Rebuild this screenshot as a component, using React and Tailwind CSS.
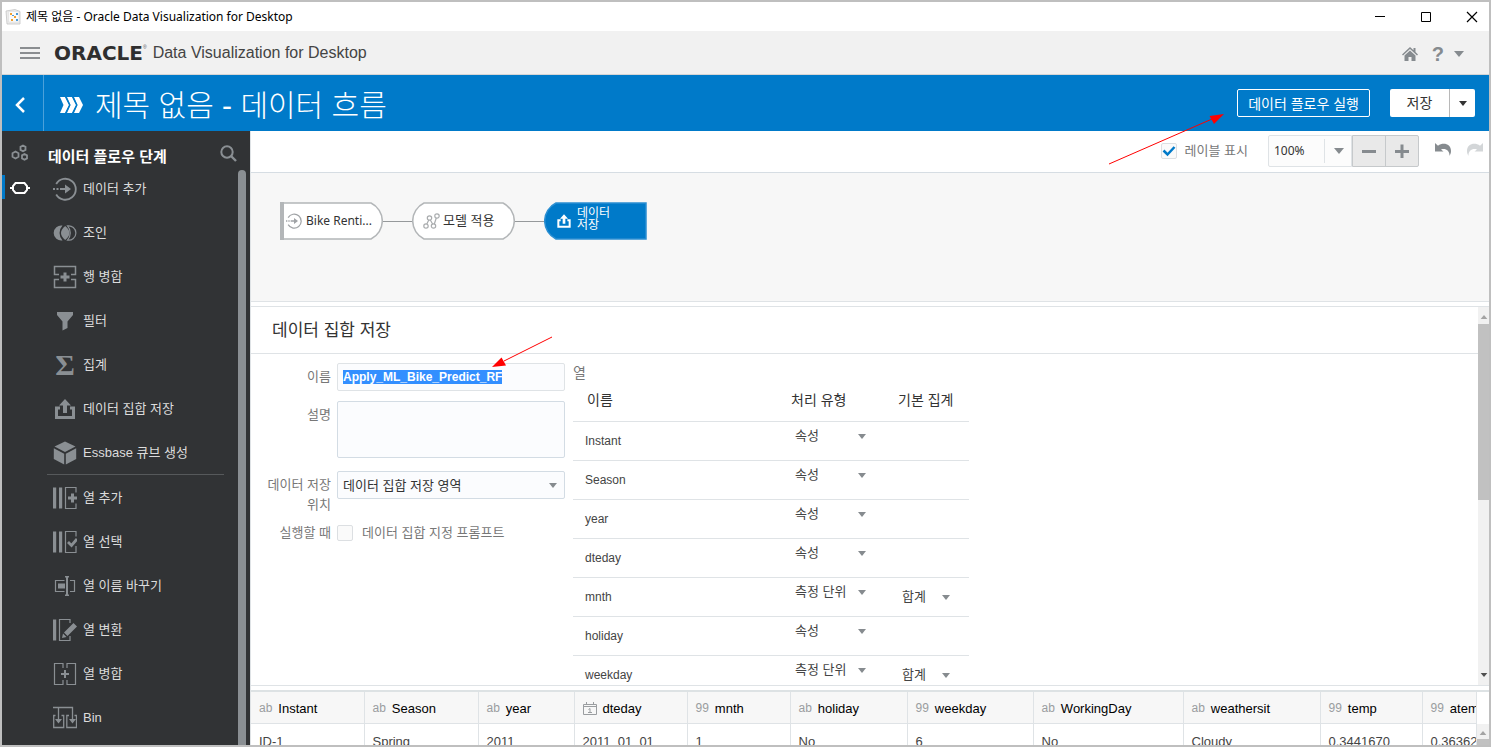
import { useEffect, useRef, useState } from "react";

const ICONS = {
  add: (
    <>
      <path d="M3.2 7A10.5 10.5 0 1 1 3.2 17.5" fill="none" stroke="currentColor" strokeWidth="1.8" />
      <path d="M0 11h2v2H0zM3.5 11h2v2h-2zM7 11h5V7.5l6 4.5-6 4.5V13H7z" />
    </>
  ),
  join: (
    <>
      <path d="M9.5 4.5A7.6 7.6 0 1 0 9.5 19.5A11 11 0 0 1 9.500 4.500z" />
      <path d="M12.200 5C15 7.500 16.500 9.500 16.500 12S15 16.500 12.200 19C9.400 16.500 8 14.500 8 12S9.400 7.500 12.200 5z" />
      <path d="M14.500 4.900A7.200 7.200 0 1 1 14.500 19.100A10.500 10.500 0 0 0 14.500 4.900z" fill="none" stroke="currentColor" strokeWidth="1.200" />
    </>
  ),
  rowMerge: (
    <>
      <path d="M6 9.5H1.5v-8h21v8H18M6 14.5H1.5v8h21v-8H18" fill="none" stroke="currentColor" strokeWidth="1.5" />
      <path d="M10.5 7.5h3v3h3v3h-3v3h-3v-3h-3v-3h3z" />
    </>
  ),
  filter: <path d="M4 3h16v3l-5.5 6.5V19L9.5 21.5v-9L4 6z" />,
  save: (
    <>
      <path d="M7 11H3.5v9.5h17V11H17" fill="none" stroke="currentColor" strokeWidth="3" />
      <path d="M12 2l6 6.5h-4V16h-4V8.500H6z" />
    </>
  ),
  cube: (
    <>
      <path d="M12 0.500L22.500 5.500 12 11 1.500 5.500z" />
      <path d="M0.800 7.300L11.200 12.700V23.600L0.800 18z" />
      <path d="M23.200 7.300L12.800 12.700V23.600L23.200 18z" />
    </>
  ),
  addCol: (
    <>
      <path d="M0 1.500h3.200v21H0zM6 1.500h3.200v21H6z" />
      <path d="M23 6.500V1.500H12.500v21H23V17.500" fill="none" stroke="currentColor" strokeWidth="1.200" />
      <path d="M18 7.500h3v3h3v3h-3v3h-3v-3h-3v-3h3z" />
    </>
  ),
  selectCol: (
    <>
      <path d="M0 1.500h3.200v21H0zM6 1.500h3.200v21H6z" />
      <path d="M23 6.500V1.500H12.500v21H23V16" fill="none" stroke="currentColor" strokeWidth="1.200" />
      <path d="M15 12l3.500 3.500L24 9" fill="none" stroke="currentColor" strokeWidth="2.800" />
    </>
  ),
  rename: (
    <>
      <path d="M11.500 6.500h-9v11h9M17 6.500h4.500v11H17" fill="none" stroke="currentColor" strokeWidth="1.200" />
      <path d="M5 9.500h7v5H5zM12 2h4v1.500h-1v17h1V22h-4v-1.500h1v-17h-1z" />
    </>
  ),
  transform: (
    <>
      <path d="M0 1.500h3.200v21H0z" />
      <path d="M17 5V1.500H6.500v21H17V18" fill="none" stroke="currentColor" strokeWidth="1.200" />
      <path d="M20.500 5L24 8.500 14.500 18 11 14.500zM10 15.500l3.500 3.500L9 20z" />
    </>
  ),
  colMerge: (
    <>
      <path d="M10 6V1.500H1.500v21H10V18M14 6V1.500h8.500v21H14V18" fill="none" stroke="currentColor" strokeWidth="1.200" />
      <path d="M11 8h2v3h3v2h-3v3h-2v-3H8v-2h3z" />
    </>
  ),
  bin: (
    <>
      <path d="M0 1.500h19.500V14M5.500 1.500V14M2.500 9.500H.700v12h10v-12H8.500M16 9.500h-2.200v12h9.700v-12h-2" fill="none" stroke="currentColor" strokeWidth="1.300" />
      <path d="M2 13h7l-3.500 4.500zM16 13h7l-3.500 4.500z" />
    </>
  ),
};

const STEPS = [
  ["add", "데이터 추가"],
  ["join", "조인"],
  ["rowMerge", "행 병합"],
  ["filter", "필터"],
  ["sigma", "집계"],
  ["save", "데이터 집합 저장"],
  ["cube", "Essbase 큐브 생성"],
];

const COLUMN_STEPS = [
  ["addCol", "열 추가"],
  ["selectCol", "열 선택"],
  ["rename", "열 이름 바꾸기"],
  ["transform", "열 변환"],
  ["colMerge", "열 병합"],
  ["bin", "Bin"],
];

const COLUMNS = [
  { name: "Instant", type: "속성" },
  { name: "Season", type: "속성" },
  { name: "year", type: "속성" },
  { name: "dteday", type: "속성" },
  { name: "mnth", type: "측정 단위", agg: "합계" },
  { name: "holiday", type: "속성" },
  { name: "weekday", type: "측정 단위", agg: "합계" },
];

const PREVIEW = [
  { kind: "ab", name: "Instant", value: "ID-1", width: "w-[113px]" },
  { kind: "ab", name: "Season", value: "Spring", width: "w-[114px]" },
  { kind: "ab", name: "year", value: "2011", width: "w-[96px]" },
  { kind: "date", name: "dteday", value: "2011_01_01", width: "w-[113px]" },
  { kind: "99", name: "mnth", value: "1", width: "w-[103px]" },
  { kind: "ab", name: "holiday", value: "No", width: "w-[117px]" },
  { kind: "99", name: "weekday", value: "6", width: "w-[126px]" },
  { kind: "ab", name: "WorkingDay", value: "No", width: "w-[150px]" },
  { kind: "ab", name: "weathersit", value: "Cloudy", width: "w-[137px]" },
  { kind: "99", name: "temp", value: "0.3441670", width: "w-[102px]" },
  { kind: "99", name: "atemp", value: "0.3636250", width: "w-[102px]" },
];

function Icon({ name, className = "size-6" }) {
  if (name === "sigma") {
    return (
      <span aria-hidden="true" className="w-6 text-center font-['Liberation_Serif',serif] text-[30px] leading-6 font-bold">
        Σ
      </span>
    );
  }
  return (
    <svg viewBox="0 0 24 24" fill="currentColor" aria-hidden="true" className={`shrink-0 ${className}`}>
      {ICONS[name]}
    </svg>
  );
}

function Caret({ className = "" }) {
  return (
    <svg viewBox="0 0 10 6" fill="currentColor" aria-hidden="true" className={className}>
      <path d="M0 0h10L5 6z" />
    </svg>
  );
}

function Arrow({ className, d, head }) {
  return (
    <svg viewBox="0 0 120 54" aria-hidden="true" className={`pointer-events-none absolute z-10 h-[54px] w-[120px] ${className}`}>
      <path d={d} stroke="#f00" strokeWidth="1" />
      <path d={head} fill="#f00" />
    </svg>
  );
}

function TitleBar() {
  return (
    <div className="flex h-[29px] shrink-0 items-center bg-white pl-[3px] text-black">
      <svg viewBox="0 0 16 16" aria-hidden="true" className="size-4">
        <path d="M1 2l9-1.500 5 2V15H2z" fill="#ececec" stroke="#c4c4c4" strokeWidth=".8" />
        <path d="M3.500 2.500H14V13H3.500z" fill="#fafafa" stroke="#d8d8d8" strokeWidth=".5" />
        <path d="M5 4h2v2H5zM9 7h2v2H9zM6 10h2v2H6z" fill="#f0a030" />
        <path d="M11 4h2v2h-2zM7 6h2v1H7zM11 10h2v2h-2z" fill="#4a9ad8" />
      </svg>
      <span className="ml-[5px] font-['Noto_Sans','Noto_Sans_CJK_KR',sans-serif] text-xs">
        제목 없음 - Oracle Data Visualization for Desktop
      </span>
      <div className="ml-auto flex">
        <button aria-label="최소화" className="flex h-7 w-[46px] items-center justify-center">
          <svg viewBox="0 0 12 12" className="size-3"><path d="M1 5.500h10" stroke="#000" /></svg>
        </button>
        <button aria-label="최대화" className="flex h-7 w-[46px] items-center justify-center">
          <svg viewBox="0 0 12 12" className="size-3"><path d="M1.500 1.500h9v9h-9z" fill="none" stroke="#000" /></svg>
        </button>
        <button aria-label="닫기" className="flex h-7 w-[40px] items-center justify-center pl-1.5">
          <svg viewBox="0 0 12 12" className="size-3"><path d="M1 1l10 10M11 1L1 11" stroke="#000" strokeWidth="1.200" /></svg>
        </button>
      </div>
    </div>
  );
}

function AppHeader() {
  return (
    <header className="flex h-11 shrink-0 items-center border-b border-[#d5d5d5] bg-[#f1f1f1] pr-[25px] pl-[18px]">
      <button aria-label="메뉴" className="text-[#8a8d90]">
        <svg viewBox="0 0 20 12" className="h-3 w-5">
          <path d="M0 1h20M0 6h20M0 11h20" stroke="currentColor" strokeWidth="2" />
        </svg>
      </button>
      <span className="ml-3.5 font-['DejaVu_Sans',sans-serif] text-xl leading-6 font-bold text-[#2f2f2f]">ORACLE</span>
      <span className="mb-3 text-[5px] leading-3 text-[#555]">®</span>
      <span className="ml-1.5 text-base text-[#444]">Data Visualization for Desktop</span>
      <div className="ml-auto flex items-center pt-0.5 text-[#868b8f]">
        <button aria-label="홈">
          <svg viewBox="0 0 16 14" fill="currentColor" className="h-3.5 w-4">
            <path d="M8 0l3.500 3.200V1H13.500v4L16 7.500l-1 1L8 2 1 8.500l-1-1z" />
            <path d="M8 3.500l5.500 5V14h-4v-4h-3v4h-4V8.500z" />
          </svg>
        </button>
        <button className="ml-3.5 flex items-center" aria-label="도움말">
          <span className="text-xl leading-5 font-bold">?</span>
          <Caret className="ml-2.5 h-1.5 w-2.5" />
        </button>
      </div>
    </header>
  );
}

function FlowHeader() {
  return (
    <div className="flex h-14 shrink-0 items-center bg-[#007ac9] pr-3.5 text-white">
      <button aria-label="뒤로" className="flex h-14 w-[42px] items-center border-r border-[#4ba1da] pt-1 pl-3">
        <svg viewBox="0 0 12 16" className="h-4 w-3">
          <path d="M10 1L3 8l7 7" fill="none" stroke="currentColor" strokeWidth="2.500" />
        </svg>
      </button>
      <div className="ml-4 flex items-center pt-1">
        <svg viewBox="0 0 23 16" fill="currentColor" aria-hidden="true" className="h-4 w-[23px]">
          <path d="M0 0h5l4 8-4 8H0l3.500-8zM7 0h5l4 8-4 8H7l3.500-8zM14 0h5l4 8-4 8h-5l3.500-8z" />
          <path d="M5.800 0l4 8-4 8M12.800 0l4 8-4 8" fill="none" stroke="#007ac9" strokeWidth="1.200" />
        </svg>
        <h1 className="ml-3 pt-0.5 text-[30px] leading-9 font-light">제목 없음 - 데이터 흐름</h1>
      </div>
      <button className="ml-auto h-7 rounded-xs border border-white px-2.5 pt-px text-sm">데이터 플로우 실행</button>
      <div className="ml-5 flex h-7 rounded-xs bg-white text-[#333]">
        <button className="w-[60px] border-r border-[#b8b8b8] text-sm">저장</button>
        <button aria-label="저장 옵션" className="flex w-[25px] items-center justify-center">
          <Caret className="h-[5px] w-2" />
        </button>
      </div>
    </div>
  );
}

function StepList({ steps }) {
  return (
    <ul>
      {steps.map(([icon, label]) => (
        <li key={label}>
          <button className="flex h-11 w-full items-center gap-1.5 pt-0.5 pl-[11px] text-left text-[13px] text-[#dcdcdc]">
            <span className="flex text-[#8a8f93]">
              <Icon name={icon} />
            </span>
            {label}
          </button>
        </li>
      ))}
    </ul>
  );
}

function Sidebar() {
  return (
    <aside className="flex w-[248px] shrink-0 bg-[#313335]">
      <nav className="flex w-10 flex-col">
        <button aria-label="데이터" className="flex h-11 items-center pl-[9px] text-[#8a8f93]">
          <svg viewBox="0 0 18 18" fill="none" stroke="currentColor" strokeWidth="1.800" className="size-[18px]">
            <path d="M4.500 7.500l3 1.700v3.600l-3 1.700-3-1.700V9.200zM12 1.500l2.500 1.400v3L12 7.300 9.500 5.900v-3zM13.500 10l2.500 1.400v3l-2.500 1.400-2.500-1.400v-3z" />
          </svg>
        </button>
        <button aria-label="데이터 플로우 단계" className="flex h-6 items-center border-l-3 border-[#007ac9] pt-px pl-[5px] text-white">
          <svg viewBox="0 0 20 12" fill="none" stroke="currentColor" strokeWidth="2" className="h-3 w-5">
            <path d="M5.500 1h9l2.500 3v4l-2.500 3h-9L3 8V4zM0 6h3M17 6h3" />
          </svg>
        </button>
      </nav>
      <div className="flex min-w-0 flex-1 flex-col">
        <div className="flex h-[35px] shrink-0 items-start justify-between pr-[13px] pl-1.5">
          <h2 className="pt-[17px] text-[15px] leading-[18px] font-bold text-white">데이터 플로우 단계</h2>
          <button aria-label="검색" className="pt-3.5 text-[#8a8f93]">
            <svg viewBox="0 0 17 17" fill="none" stroke="currentColor" strokeWidth="2" className="size-[17px]">
              <circle cx="7" cy="7" r="5.700" />
              <path d="M11 11l5 5" strokeWidth="2.400" />
            </svg>
          </button>
        </div>
        <div className="flex min-h-0 flex-1">
          <div className="flex-1 overflow-hidden">
            <StepList steps={STEPS} />
            <hr className="mr-3.5 ml-[5px] border-[#56595b]" />
            <StepList steps={COLUMN_STEPS} />
          </div>
          <div className="mt-1 mr-1 w-2 rounded-t-full bg-[#8a8f93]" />
        </div>
      </div>
    </aside>
  );
}

function Checkbox({ label, checked, onChange, className }) {
  return (
    <label className={`flex items-center text-[13px] text-[#777] ${className}`}>
      <span className="relative flex">
        <input
          type="checkbox"
          checked={checked}
          onChange={(e) => onChange(e.target.checked)}
          className="peer size-4 appearance-none rounded-xs border border-[#dcdfe2] bg-[#fafafa]"
        />
        <svg viewBox="0 0 16 16" className="pointer-events-none absolute inset-0 hidden size-4 peer-checked:block">
          <path d="M2.500 7.500l4 4 7-7.500" fill="none" stroke="#007ac9" strokeWidth="2.500" />
        </svg>
      </span>
      <span>{label}</span>
    </label>
  );
}

function Toolbar() {
  const [showLabels, setShowLabels] = useState(true);

  return (
    <div className="flex h-[42px] shrink-0 items-center border-b border-[#d6dde3] bg-white pr-1.5 pb-px">
      <Checkbox label="레이블 표시" checked={showLabels} onChange={setShowLabels} className="ml-auto gap-2" />
      <div className="relative ml-5 flex">
        <select
          aria-label="확대/축소"
          className="h-8 w-[84px] appearance-none rounded-l-xs border border-[#dfe3e6] bg-[#fcfcfc] pl-[5px] font-['Noto_Sans',sans-serif] text-xs text-[#333]"
        >
          <option>100%</option>
        </select>
        <span className="pointer-events-none absolute inset-y-1 right-0 flex w-7 items-center justify-center border-l border-[#dfe3e6] text-[#868b8f]">
          <Caret className="h-1.5 w-2.5" />
        </span>
      </div>
      <div className="flex h-8 rounded-r-xs border border-[#c6c9cb] bg-[#e9e9e9] text-[#868b8f]">
        <button aria-label="축소" className="flex w-[33px] items-center justify-center border-r border-[#c6c9cb]">
          <svg viewBox="0 0 14 14" className="size-3.5"><path d="M0 7.500h14" stroke="currentColor" strokeWidth="3" /></svg>
        </button>
        <button aria-label="확대" className="flex w-8 items-center justify-center">
          <svg viewBox="0 0 14 14" className="size-3.5"><path d="M0 7.500h14M7 .5v14" stroke="currentColor" strokeWidth="3" /></svg>
        </button>
      </div>
      <button aria-label="실행 취소" className="ml-4 pb-1 text-[#868b8f]">
        <svg viewBox="0 0 17 13" fill="currentColor" className="h-[13px] w-[17px]">
          <path d="M0 0l3 2.700C8-.800 16 .500 16 8c0 2-.700 3.500-1.500 5 .3-5-3.500-8-8.500-6.500L8.500 8.500H0z" />
        </svg>
      </button>
      <button aria-label="다시 실행" className="ml-3.5 pb-1 text-[#d3d6d8]">
        <svg viewBox="0 0 17 13" fill="currentColor" className="h-[13px] w-[17px]">
          <path d="M17 0l-3 2.700C9-.800 1 .500 1 8c0 2 .700 3.500 1.500 5-.3-5 3.500-8 8.500-6.500L8.500 8.500H17z" />
        </svg>
      </button>
    </div>
  );
}

function FlowNode({ shape, selected, children }) {
  return (
    <button className={`relative flex h-[38px] w-[103px] items-center text-left ${selected ? "text-white" : "text-[#333]"}`}>
      <svg viewBox="0 0 103 38" aria-hidden="true" className="absolute inset-0 h-[38px] w-[103px]">
        <path d={shape} fill={selected ? "#007ac9" : "#fff"} stroke={selected ? "#2b8fd2" : "#b3b6b8"} strokeWidth="1.500" />
        {shape.startsWith("M2") && <path d="M2 0v38" stroke="#b3b6b8" strokeWidth="4" />}
      </svg>
      {children}
    </button>
  );
}

function FlowCanvas() {
  return (
    <section className="flex h-[129px] shrink-0 items-start border-b border-[#dfe3e6] bg-[#f7f7f7] pt-[29px] pl-[29px]">
      <FlowNode shape="M2 1H91A20 20 0 0 1 91 37H2z">
        <span className="relative flex items-center pl-1.5 text-[#a0a3a6]">
          <Icon name="add" className="size-4" />
          <span className="ml-1 font-['Noto_Sans',sans-serif] text-xs text-[#333]">Bike Renti...</span>
        </span>
      </FlowNode>
      <span className="mt-[19px] h-px w-[29px] bg-[#96999b]" />
      <FlowNode shape="M12 1H91A20 20 0 0 1 91 37H12A20 20 0 0 1 12 1z">
        <span className="relative flex items-center pl-[11px] text-[13px]">
          <svg viewBox="0 0 17 16" fill="none" stroke="#a9acae" strokeWidth="1.200" className="h-4 w-[17px]">
            <circle cx="3" cy="13" r="2.200" />
            <circle cx="6.500" cy="5" r="2.200" />
            <circle cx="10.500" cy="13" r="2.200" />
            <circle cx="14" cy="3" r="2.200" />
            <path d="M3.800 11l2-4M7.300 7l2.300 4M11.300 11l2-6" />
          </svg>
          <span className="ml-[3px]">모델 적용</span>
        </span>
      </FlowNode>
      <span className="mt-[19px] h-px w-[29px] bg-[#96999b]" />
      <FlowNode shape="M12 1H102V37H12A20 20 0 0 1 12 1z" selected>
        <span className="relative flex items-center pl-3">
          <Icon name="save" className="size-4" />
          <span className="ml-[5px] pb-1 text-xs leading-3">
            데이터
            <br />
            저장
          </span>
        </span>
      </FlowNode>
    </section>
  );
}

function SaveForm() {
  const nameRef = useRef(null);
  const [name, setName] = useState("Apply_ML_Bike_Predict_RF");
  const [prompt, setPrompt] = useState(false);

  useEffect(() => {
    nameRef.current.focus();
    nameRef.current.select();
  }, []);

  return (
    <form className="w-[314px] shrink-0 pt-[9px] text-[13px] leading-5 text-[#777]">
      <div className="flex gap-1.5">
        <label htmlFor="ds-name" className="w-20 pt-1 text-right">이름</label>
        <input
          id="ds-name"
          ref={nameRef}
          value={name}
          onChange={(e) => setName(e.target.value)}
          className="h-7 min-w-0 flex-1 rounded-xs border border-[#dfe3e6] bg-[#fbfcfe] px-[5px] text-xs leading-[14px] font-bold text-[#333] outline-none selection:bg-[#338fff] selection:text-white"
        />
      </div>
      <div className="mt-2.5 flex gap-1.5">
        <label htmlFor="ds-desc" className="w-20 pt-1 text-right">설명</label>
        <textarea id="ds-desc" className="h-[57px] min-w-0 flex-1 resize-none rounded-xs border border-[#d3dce4] bg-[#fbfcfe]" />
      </div>
      <div className="mt-[13px] flex h-11 items-start gap-1.5">
        <label htmlFor="ds-target" className="w-20 pt-1 pl-2.5 text-right">데이터 저장 위치</label>
        <div className="relative flex-1">
          <select
            id="ds-target"
            className="h-7 w-full appearance-none rounded-xs border border-[#d3dce4] bg-[#fbfcfe] pt-px pl-[5px] text-[13px] text-[#333]"
          >
            <option>데이터 집합 저장 영역</option>
          </select>
          <Caret className="pointer-events-none absolute top-3 right-2 h-[5px] w-2 text-[#868b8f]" />
        </div>
      </div>
      <div className="mt-2 flex items-center gap-1.5">
        <span className="w-20 text-right">실행할 때</span>
        <Checkbox label="데이터 집합 지정 프롬프트" checked={prompt} onChange={setPrompt} className="gap-[9px]" />
      </div>
    </form>
  );
}

function CellSelect({ label, value, className }) {
  return (
    <div className={`relative ${className}`}>
      <select aria-label={label} className="h-7 w-full appearance-none text-[13px] text-[#444]">
        <option>{value}</option>
      </select>
      <Caret className="pointer-events-none absolute top-3 right-0 h-[5px] w-2 text-[#868b8f]" />
    </div>
  );
}

function ColumnTable() {
  return (
    <div className="ml-2 w-[396px] shrink-0 pt-[9px]">
      <h3 className="h-5 text-sm leading-5 text-[#777]">열</h3>
      <table className="w-full table-fixed text-left">
        <thead>
          <tr className="h-[38px] border-b border-[#dfe3e6] align-top text-sm text-[#333]">
            <th className="w-[218px] pt-[7px] pl-3.5 font-normal">이름</th>
            <th className="w-[107px] pt-[7px] font-normal">처리 유형</th>
            <th className="pt-[7px] font-normal">기본 집계</th>
          </tr>
        </thead>
        <tbody>
          {COLUMNS.map((col) => (
            <tr key={col.name} className="h-[39px] border-b border-[#dfe3e6]">
              <td className="pl-3 text-xs text-[#444]">{col.name}</td>
              <td className="align-top">
                <CellSelect label={`${col.name} 처리 유형`} value={col.type} className="ml-1 w-[71px]" />
              </td>
              <td>
                {col.agg && <CellSelect label={`${col.name} 기본 집계`} value={col.agg} className="ml-1 w-12" />}
              </td>
            </tr>
          ))}
        </tbody>
      </table>
    </div>
  );
}

function SavePanel() {
  return (
    <section className="relative mt-1 flex min-h-0 flex-1 border-y border-[#dfe3e6] bg-white">
      <div className="flex min-w-0 flex-1 flex-col">
        <h2 className="flex h-[47px] shrink-0 items-center border-b border-[#dfe3e6] pt-0.5 pl-[21px] text-[17px] text-[#333]">
          데이터 집합 저장
        </h2>
        <div className="flex min-h-0 flex-1 items-start overflow-hidden">
          <SaveForm />
          <ColumnTable />
        </div>
      </div>
      <div className="flex w-[11px] shrink-0 flex-col items-center bg-[#f1f1f1]">
        <Caret className="mt-2 h-1 w-2 rotate-180 text-[#a3a3a3]" />
        <div className="mt-[5px] h-44 w-full bg-[#c1c1c1]" />
        <Caret className="mt-auto mb-2 h-1 w-2 text-[#505050]" />
      </div>
      <Arrow className="top-[29px] left-[241px]" d="M60 1L12 25" head="M0 31L9.500 21.500L14 29.500z" />
    </section>
  );
}

function CalendarIcon() {
  return (
    <svg viewBox="0 0 14 13" fill="none" stroke="#9a9da0" aria-hidden="true" className="h-[13px] w-3.5">
      <path d="M.5 2.500h13v10H.5zM.5 4.500h13M3.500 0v3M10.500 0v3M5.500 7.500L7 6.500v4M5 10.500h4" />
    </svg>
  );
}

function Preview() {
  return (
    <section className="mt-1 flex h-[55px] shrink-0 border-t-2 border-[#dde2e4] bg-white">
      <div className="min-w-0 flex-1 overflow-hidden border-r border-[#dfe3e6]">
        <table className="w-[1273px] table-fixed text-left text-[13px] whitespace-nowrap">
          <thead>
            <tr className="h-[31px] border-b border-[#dfe3e6] bg-[#f7f7f7]">
              {PREVIEW.map((col) => (
                <th key={col.name} className={`border-r border-[#dfe3e6] pt-0.5 pl-2 font-normal text-black ${col.width}`}>
                  <span className="flex items-center gap-1.5">
                    {col.kind === "date" ? <CalendarIcon /> : <span className="text-xs text-[#9a9da0]">{col.kind}</span>}
                    {col.name}
                  </span>
                </th>
              ))}
            </tr>
          </thead>
          <tbody>
            <tr className="h-9">
              {PREVIEW.map((col) => (
                <td key={col.name} className="border-r border-[#dfe3e6] pl-2 text-[#444]">{col.value}</td>
              ))}
            </tr>
          </tbody>
        </table>
      </div>
      <div className="mt-8 flex w-3 shrink-0 flex-col items-center bg-[#f1f1f1]">
        <Caret className="mt-[7px] h-1 w-2 rotate-180 text-[#a3a3a3]" />
        <div className="mt-1 w-full flex-1 bg-[#c1c1c1]" />
      </div>
    </section>
  );
}

export default function App() {
  return (
    <div className="relative flex h-screen flex-col overflow-hidden border-2 border-[#bfbfbf] bg-white font-['Liberation_Sans','Noto_Sans_CJK_KR',sans-serif]">
      <TitleBar />
      <AppHeader />
      <FlowHeader />
      <div className="flex min-h-0 flex-1">
        <Sidebar />
        <main className="flex min-w-0 flex-1 flex-col border-l border-[#dfe3e6]">
          <Toolbar />
          <FlowCanvas />
          <SavePanel />
          <Preview />
        </main>
      </div>
      <Arrow className="top-[111px] right-[262px]" d="M2 51L105 6" head="M117 1L102.500 3L107 11z" />
    </div>
  );
}
